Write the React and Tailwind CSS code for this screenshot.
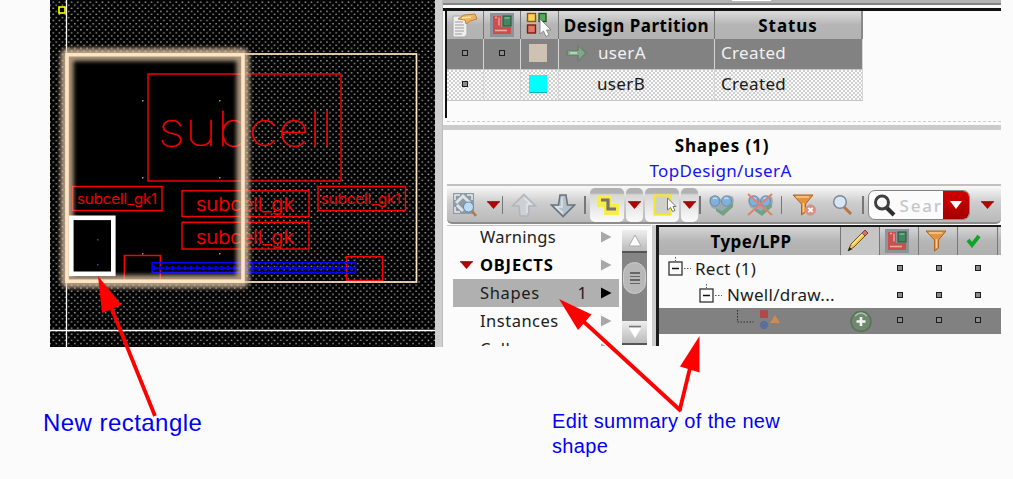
import React from "react";

const SANS = "font-['Noto_Sans','Open_Sans',sans-serif]";

function LayoutCanvas() {
  return (
    <svg width="385" height="347" viewBox="50 0 385 347" className="block shrink-0">
      <defs>
        <pattern id="grid" x="52" y="1" width="6.15" height="6.15" patternUnits="userSpaceOnUse">
          <rect x="0.5" y="0.5" width="1.5" height="1.3" fill="#a8a8a8" />
          <rect x="3.57" y="3.57" width="1.5" height="1.3" fill="#a8a8a8" />
        </pattern>
        <filter id="soft" x="-10%" y="-10%" width="120%" height="120%">
          <feGaussianBlur stdDeviation="2" />
        </filter>
      </defs>
      <rect x="50" y="0" width="385" height="347" fill="#000" />
      <rect x="50" y="0" width="385" height="346" fill="url(#grid)" />
      <rect x="67" y="55" width="176" height="226" fill="#000" />
      <g fill="#9a9aa8">
        {[142, 219].map((x) =>
          [100, 177, 253].map((y) => <rect key={x + "-" + y} x={x} y={y} width="1.5" height="1.5" />)
        )}
      </g>
      <path d="M66.5 0V347M50 330.5H435" stroke="#fff" strokeWidth="1.3" />
      <rect x="59" y="7" width="6" height="6" fill="#000" stroke="#ff0" strokeWidth="1.6" />

      <g fill="none" stroke="#f00" strokeWidth="1.4">
        <rect x="148" y="74" width="193" height="107" />
        <rect x="72.5" y="186.5" width="89.5" height="24" />
        <rect x="318" y="186.5" width="87.5" height="24" />
        <rect x="182" y="190.8" width="127" height="25.7" />
        <rect x="182" y="222.3" width="127" height="26.7" />
        <rect x="124.3" y="255.5" width="36" height="26" />
        <rect x="346.5" y="256.5" width="36" height="24" />
      </g>
      <g fill="#f00" className="font-[Inter,'Liberation_Sans',sans-serif]">
        <text x="158" y="145.500" fontSize="47" fontWeight="100" textLength="175" lengthAdjust="spacingAndGlyphs" stroke="#f00" strokeWidth="0.4">subcell</text>
        <g stroke="#f00" strokeWidth="0.2">
          <text x="77" y="203.500" fontSize="14.5" fontWeight="300" textLength="80" lengthAdjust="spacingAndGlyphs">subcell_gk1</text>
          <text x="321" y="203.500" fontSize="14.5" fontWeight="300" textLength="80" lengthAdjust="spacingAndGlyphs">subcell_gk1</text>
          <text x="196" y="211" fontSize="18.5" fontWeight="300" textLength="98" lengthAdjust="spacingAndGlyphs">subcell_gk</text>
          <text x="196" y="243.500" fontSize="18.5" fontWeight="300" textLength="98" lengthAdjust="spacingAndGlyphs">subcell_gk</text>
        </g>
      </g>
      <g fill="none" stroke="#00f">
        <rect x="152.2" y="262.8" width="203.3" height="9.7" strokeWidth="1.6" />
        <path d="M153 268H355M253.5 263V272" strokeWidth="1.4" />
        <path d="M153 268H355" strokeWidth="4.4" strokeDasharray="2.2 3.95" />
      </g>

      <rect x="66.5" y="54" width="350" height="228" fill="none" stroke="#ffe4c4" strokeWidth="1.7" />
      <rect x="67" y="54.5" width="176" height="227" rx="1" fill="none" stroke="#d9c0a0" strokeWidth="13" opacity="0.78" filter="url(#soft)" />
      <rect x="67" y="54.7" width="176" height="226.5" fill="none" stroke="#ffe4c4" strokeWidth="3.6" />

      <rect x="71.3" y="217.8" width="42" height="56" fill="#000" stroke="#fff" strokeWidth="4.6" />
      <rect x="97" y="239" width="1.5" height="1.5" fill="#7a20d0" />
      <rect x="97" y="264" width="1.5" height="1.5" fill="#7a20d0" />
    </svg>
  );
}

function Dot() {
  return <span className="block size-[6px] border-[1.5px] border-[#1c1c1c] bg-[#8b8b8b]" />;
}

function PartitionIcon() {
  return (
    <svg width="26" height="26" viewBox="0 0 26 26">
      <rect x="1" y="1" width="24" height="24" fill="#8e939b" />
      <rect x="4" y="4" width="8" height="14" fill="#c9504f" />
      <rect x="4" y="15" width="18" height="7" fill="#c9504f" />
      <path d="M6 5.5h2M10 5.5v8M6 18.5h12" stroke="#efaaa6" strokeWidth="1.3" />
      <rect x="14" y="4" width="8" height="10" fill="#438660" stroke="#24553a" />
      <path d="M15.500 6h5" stroke="#9cd0b0" />
    </svg>
  );
}

function NoteIcon() {
  return (
    <svg width="28" height="27" viewBox="0 0 28 27">
      <path d="M2 4h14v18l-2 3H2z" fill="#efefef" stroke="#a8a8a8" />
      <path d="M4 10h8M4 13h9M4 16h9M4 19h9M4 22h7" stroke="#999" strokeWidth="1" />
      <path d="M7 7l6-4 11-1 2 5-7 2-4 3-1-4z" fill="#f0b459" stroke="#b77424" strokeWidth=".8" />
      <path d="M11 6l9-1" stroke="#ffe3a6" strokeWidth="1.6" />
    </svg>
  );
}

function PaletteIcon() {
  return (
    <svg width="27" height="26" viewBox="0 0 27 26">
      <rect x="1.500" y="1.500" width="8" height="8" fill="#fcd05a" stroke="#8c5a00" strokeWidth="1.4" />
      <rect x="13" y="1.500" width="7" height="8" fill="#57a85c" stroke="#1e5826" strokeWidth="1.4" />
      <rect x="1.500" y="13" width="8" height="8" fill="#dd7767" stroke="#7d1c13" strokeWidth="1.4" />
      <path d="M14 7v15l3.500-3 2.500 5.500 3-1.500-2.500-5h4.500z" fill="#fff" stroke="#777" strokeWidth=".8" />
    </svg>
  );
}

function Funnel({ badge }) {
  return (
    <svg width="25" height="24" viewBox="0 0 25 24">
      <path d="M1 2h20l-7.500 9v8l-4 3V11z" fill="#e3933f" stroke="#ad6621" />
      <path d="M4 4h13M11.500 10v9" stroke="#fbcb8f" strokeWidth="1.5" />
      {badge && (
        <g>
          <circle cx="18.500" cy="17" r="5.200" fill="#dd8d80" stroke="#c0a09a" />
          <path d="M16.300 14.800l4.400 4.400M20.700 14.800l-4.400 4.400" stroke="#fff" strokeWidth="1.800" />
        </g>
      )}
    </svg>
  );
}

function PartitionTable() {
  const cell = "flex items-center border-r-[1.5px] border-[#d6d6d6] pb-[3px]";
  return (
    <div className="h-[110px] w-[558px] border-t-[3px] border-[#111]">
      <div className="ml-[2px] flex h-full border-l-[2px] border-[#111]">
        <div className="w-[416px] text-[17px] leading-none tracking-[0.35px]">
          <div className="flex h-[28px] bg-linear-to-b from-[#dcdcdc] via-[#b5b5b5] to-[#b3b3b3] font-bold text-black">
            <div className="flex w-[37px] items-center justify-center border-r border-[#777]"><NoteIcon /></div>
            <div className="flex w-[37px] items-center justify-center border-r border-[#777]"><PartitionIcon /></div>
            <div className="flex w-[38px] items-center justify-center border-r border-[#777]"><PaletteIcon /></div>
            <div className="flex w-[156px] items-center justify-center border-r-[1.5px] border-[#777] whitespace-nowrap tracking-[0.5px]">Design Partition</div>
            <div className="flex w-[148px] items-center justify-center border-r-2 border-[#888] tracking-[0.9px]">Status</div>
          </div>
          <div className="flex h-[30px] bg-[#828282] text-[#f1f1f1]">
            <div className={"w-[37px] justify-center " + cell}><Dot /></div>
            <div className={"w-[37px] justify-center " + cell}><Dot /></div>
            <div className={"w-[38px] justify-center " + cell}><span className="mr-1 block size-[18px] bg-[#d0c2b2]" /></div>
            <div className={"w-[156px] pl-[7px] " + cell}>
              <svg width="22" height="22" viewBox="0 0 22 22">
                <path d="M0 8h11V2l11 9-11 9v-6H0z" fill="#71806f" />
                <path d="M2 9h11V5l6 6-6 6v-4H2z" fill="#7fa88d" />
                <path d="M4 11h7" stroke="#c6e2cd" strokeWidth="1.500" />
              </svg>
              <span className="ml-[10px]">userA</span>
            </div>
            <div className={"w-[148px] pl-[6px] " + cell}>Created</div>
          </div>
          <div className="flex h-[32px] border-y border-[#c6c6c6] bg-[repeating-conic-gradient(#fbfbfb_0_25%,#cfcfcf_0_50%)] bg-[length:4px_4px] text-[#181818]">
            <div className={"w-[37px] justify-center " + cell}><Dot /></div>
            <div className={"w-[37px] " + cell} />
            <div className={"w-[38px] justify-center " + cell}><span className="mr-1 block size-[18px] bg-[#00ffff] border-b border-[#0bb]" /></div>
            <div className={"w-[156px] pl-[38px] " + cell}>userB</div>
            <div className={"w-[148px] pl-[6px] " + cell}>Created</div>
          </div>
        </div>
      </div>
    </div>
  );
}

function RedTri({ className }) {
  return (
    <svg width="13" height="8" viewBox="0 0 13 8" className={"shrink-0 " + className}>
      <path d="M0 .5h13L6.500 8z" fill="#b80000" />
      <path d="M0 .8h13" stroke="#6d2020" />
    </svg>
  );
}

function Sep({ className }) {
  return <span className={"block h-[18px] w-[1.5px] shrink-0 bg-[#777] " + className} />;
}

function Bird({ crossed, className }) {
  return (
    <svg width="27" height="24" viewBox="0 0 27 24" className={"shrink-0 " + className}>
      <path d="M2 4q5-3 9 0l2.500 3L16 4q5-3 9 0 2 6-1 9l-5 3-5 3-4-2-6-2Q0 10 2 4z" fill="#9aa9b2" />
      <ellipse cx="7" cy="8" rx="4.800" ry="5.200" fill="#7fb0de" stroke="#6b8196" strokeWidth=".8" />
      <ellipse cx="18.500" cy="8" rx="5" ry="5.200" fill="#7fb0de" stroke="#6b8196" strokeWidth=".8" />
      <path d="M5 6q2-2 4 0M16.500 6q2-2 4 0" fill="none" stroke="#c3ddf3" strokeWidth="1.400" />
      <path d="M8 15l6 3 11-8v4l-10 9-7-5z" fill="#74a283" />
      {crossed && <path d="M1 1l24 21M25 1L1 22" stroke="#e2806c" strokeWidth="2" />}
    </svg>
  );
}

function Arrow({ up, className }) {
  return (
    <svg width="26" height="25" viewBox="0 0 26 25" className={"shrink-0 " + className}>
      <path
        d={up ? "M13 1.500L24.500 13H18l-1 10H9L8 13H1.500z" : "M13 23.500L1.500 12H8.500L10 2h6l1.500 10h7z"}
        fill={up ? "#cdd1d3" : "#b5c2cb"}
        stroke={up ? "#b3b7bb" : "#68737e"}
        strokeWidth="1.600"
      />
      <path d={up ? "M13 5l7 6h-4v9" : "M12 4v10H6l7 6"} fill="none" stroke="#e2e8ec" strokeWidth="1.300" />
    </svg>
  );
}

function Toolbar() {
  const pressed = "flex h-[34px] shrink-0 items-center justify-center rounded-[5px] bg-linear-to-b from-[#b2b2b2] from-15% via-[#d7d7d7] via-20% to-[#fbfbfb]";
  return (
    <div className="flex h-[38px] items-center overflow-hidden rounded-b-[5px] border-b-2 border-[#8c8c8c] bg-linear-to-b from-[#fafafa] via-[#cecece] via-45% to-[#b9b9b9] pt-[2px]">
      <svg width="26" height="26" viewBox="0 0 26 26" className="ml-[5px] shrink-0">
        <rect x="1" y="1" width="21" height="21" fill="#8e9aa4" />
        <path d="M3 8V3h5M15 3h5v5M3 15v5h5" fill="none" stroke="#e6ecf0" strokeWidth="1.500" />
        <path d="M4 11l7-7 7 7M5 13l6 6" fill="none" stroke="#dbe3e8" strokeWidth="3" />
        <circle cx="16.500" cy="15" r="5" fill="#bfdbf2" stroke="#5f8ab4" />
        <path d="M20 19l4 5" stroke="#bd7743" strokeWidth="2.600" />
      </svg>
      <RedTri className="ml-[9px]" />
      <Sep className="ml-[1.5px]" />
      <Arrow up className="ml-[8px]" />
      <Arrow className="ml-[13px]" />
      <Sep className="ml-[8px]" />
      <div className={pressed + " ml-[4.500px] w-[34px]"}>
        <svg width="24" height="22" viewBox="0 0 24 22" className="ml-1">
          <path d="M0 1h14v9h8v11H7v-8H0z" fill="#f6ed4a" />
          <path d="M4 6h7v9h8" fill="none" stroke="#77746a" strokeWidth="3.200" />
        </svg>
      </div>
      <div className={pressed + " ml-[2px] w-[17px]"}><RedTri className="" /></div>
      <div className={pressed + " ml-[2px] w-[34px]"}>
        <svg width="26" height="24" viewBox="0 0 26 24" className="ml-1">
          <rect x="3.500" y="2.500" width="16" height="19" fill="#d1d1c9" stroke="#f5e72a" strokeWidth="2.200" />
          <path d="M16.500 5v12l3-2.500 2 4 2.500-1-2-4H25z" fill="#fafafa" stroke="#777" />
        </svg>
      </div>
      <div className={pressed + " ml-[2px] w-[17px]"}><RedTri className="" /></div>
      <Sep className="ml-[1px]" />
      <Bird className="ml-[7px]" />
      <Bird crossed className="ml-[12px]" />
      <Sep className="ml-[7px]" />
      <span className="ml-[10px] shrink-0"><Funnel badge /></span>
      <svg width="21" height="22" viewBox="0 0 21 22" className="ml-[15px] shrink-0">
        <path d="M12 13l7 7" stroke="#b77543" strokeWidth="3" />
        <circle cx="8" cy="8" r="6.300" fill="#d7e5f5" stroke="#7d8795" strokeWidth="1.500" />
      </svg>
      <Sep className="ml-[9px]" />
      <div className="ml-[4px] flex h-[30px] w-[102px] shrink-0 overflow-hidden rounded-[7px] border-[1.5px] border-[#858585] bg-[#fbfbfb]">
        <div className="flex w-[75px] items-center overflow-hidden pl-[4px]">
          <svg width="23" height="23" viewBox="0 0 23 23" className="shrink-0">
            <path d="M13 13l8 8" stroke="#2d2d2d" strokeWidth="4" />
            <circle cx="9" cy="8.500" r="6.500" fill="#fafafa" stroke="#404040" strokeWidth="3" />
          </svg>
          <span className="ml-[4px] text-[17px] leading-none font-medium tracking-[1.8px] text-[#c6c6c6]">Sear</span>
        </div>
        <div className="flex w-[26px] items-center justify-center bg-linear-to-b from-[#d20000] to-[#a40000]">
          <svg width="12" height="8" viewBox="0 0 12 8"><path d="M0 0h12L6 8z" fill="#fff" /></svg>
        </div>
      </div>
      <RedTri className="ml-[11px]" />
    </div>
  );
}

function SideTri({ dark }) {
  return (
    <svg width="12" height="12" viewBox="0 0 12 12" className="shrink-0">
      <path d="M1 .5L11.500 6 1 11.500z" fill={dark ? "#000" : "#a8a8a8"} />
    </svg>
  );
}

function Category({ label, track, bold, selected, count }) {
  return (
    <div className={"flex h-[28px] w-[166px] shrink-0 items-center pr-[7px] " + (selected ? "bg-[#b0b0b0]" : "")}>
      <div className="flex w-[27px] shrink-0 pl-[7px]">
        {bold && <RedTri className="" />}
      </div>
      <span className={"text-[16.5px] leading-none " + track + (bold ? " font-bold text-black" : " text-[#1c1c1c]")}>{label}</span>
      <span className="ml-auto mr-[13px] text-[16.5px] leading-none text-[#1c1c1c]">{count}</span>
      <SideTri dark={selected} />
    </div>
  );
}

function ScrollBar() {
  return (
    <div className="flex h-[119px] w-[25px] shrink-0 flex-col">
      <div className="mt-[4px] flex h-[23px] items-center justify-center border-b-2 border-[#555] bg-linear-to-b from-[#eee] to-[#bbb]">
        <svg width="14" height="13" viewBox="0 0 14 13"><path d="M1 12L7 1l6 11z" fill="#fff" stroke="#aaa" /></svg>
      </div>
      <div className="flex h-[68px] flex-col items-center bg-[#858585] px-[1px] pt-[9px]">
        <div className="flex h-[32px] w-full flex-col items-center justify-center gap-[2px] rounded-full border border-[#ccc] bg-[#b8b8b8]">
          {[0, 1, 2, 3].map((n) => <span key={n} className="block h-[1.5px] w-[10px] bg-[#666]" />)}
        </div>
      </div>
      <div className="flex h-[24px] items-center justify-center border-b-2 border-[#555] bg-linear-to-b from-[#eee] to-[#bbb]">
        <svg width="14" height="14" viewBox="0 0 14 14"><path d="M1 3h12L7 13z" fill="#fff" /><path d="M1 1.500h12" stroke="#777" strokeWidth="1.500" /></svg>
      </div>
    </div>
  );
}

function Minus({ className }) {
  return (
    <svg width="24" height="22" viewBox="0 0 24 22" className={"shrink-0 " + className}>
      <rect x="1" y="5" width="13" height="13" fill="#fbfbfb" stroke="#333" strokeWidth="1.300" />
      <path d="M4 11.500h7" stroke="#111" strokeWidth="1.500" />
      <path d="M7.500 0v4M16 11.500h7" stroke="#555" strokeDasharray="1.500 1.500" />
    </svg>
  );
}

function Flags() {
  return (
    <div className="flex items-center">
      {[0, 1, 2].map((n) => <div key={n} className="flex w-[39px] justify-center"><Dot /></div>)}
    </div>
  );
}

function TreeTable() {
  const row = "flex h-[26.5px] w-[342px] items-center text-[17px] leading-none tracking-[0.3px] text-[#1c1c1c]";
  return (
    <div className="h-[121px] w-[345px] border-t-[2px] border-l-[3px] border-[#1b1b1b]">
      <div className="flex h-[28px] w-[342px] items-center bg-linear-to-b from-[#d5d5d5] via-[#b6b6b6] to-[#b0b0b0]">
        <div className="flex h-full w-[182px] items-center justify-center border-r-[1.5px] border-[#777] pl-[3px] pt-[1px] text-[17px] font-bold tracking-[0.4px] text-black">Type/LPP</div>
        <div className="flex h-full w-[39px] items-center justify-center border-r-[1.5px] border-[#777] bg-[#c5c5c5] pr-[4px]">
          <svg width="24" height="24" viewBox="0 0 24 24">
            <path d="M2 22l3-7L18 2l3 3L8 18z" fill="#f6c244" stroke="#6f5522" />
            <path d="M16 4l3-3 3 3-3 3z" fill="#d8706a" stroke="#69443c" />
            <path d="M6 16L17 5" stroke="#ffe9a0" strokeWidth="1.300" />
            <path d="M2 22l1.500-4 2.500 2.500z" fill="#222" />
          </svg>
        </div>
        <div className="flex h-full w-[39px] items-center justify-center border-r-[1.5px] border-[#777] pr-[5px]"><PartitionIcon /></div>
        <div className="flex h-full w-[39px] items-center justify-center border-r-[1.5px] border-[#777] pr-[1px]"><Funnel /></div>
        <div className="flex h-full w-[40px] items-center justify-center border-r-[1.5px] border-[#777] pr-[8px]">
          <svg width="15" height="14" viewBox="0 0 15 14"><path d="M2 6l4 5 7-9" fill="none" stroke="#10a32b" strokeWidth="3.800" /></svg>
        </div>
      </div>
      <div className={row}>
        <Minus className="ml-[9px]" />
        <span className="ml-[3px] flex-1">Rect (1)</span>
        <Flags />
        <span className="w-[4px]" />
      </div>
      <div className={row}>
        <Minus className="ml-[40px]" />
        <span className="ml-[4px] flex-1">Nwell/draw...</span>
        <Flags />
        <span className="w-[4px]" />
      </div>
      <div className="flex h-[26px] w-[342px] items-center bg-[#818181]">
        <svg width="46" height="24" viewBox="0 0 46 24" className="ml-[77px] shrink-0">
          <path d="M1.500 1v12h16" fill="none" stroke="#2c2c2c" strokeDasharray="1.500 1.500" />
          <rect x="24" y="1" width="8" height="8" fill="#ae4a4a" />
          <circle cx="28" cy="16" r="4.200" fill="#5b6f9c" />
          <path d="M39 6l5 8H34z" fill="#d08a4c" />
        </svg>
        <svg width="24" height="24" viewBox="0 0 24 24" className="ml-[67px] shrink-0">
          <circle cx="12" cy="12.500" r="10" fill="#708870" stroke="#567456" strokeWidth="1.500" />
          <path d="M6 7q6-6 12 0" fill="none" stroke="#a4c4a4" strokeWidth="1.500" />
          <path d="M12 8v9M7.500 12.500h9" stroke="#edf6ed" strokeWidth="2.600" />
        </svg>
        <span className="flex-1" />
        <div className="pb-[2px]"><Flags /></div>
        <span className="w-[4px]" />
      </div>
    </div>
  );
}

function SidePanel() {
  return (
    <div className={"flex h-[347px] w-[558px] flex-col overflow-hidden bg-[#fbfbfb] " + SANS}>
      <div className="h-[5px] shrink-0 border-b-2 border-[#858585] bg-[#b4b4b4] pl-[289px]">
        <div className="h-[1px] w-[39px] bg-white" />
      </div>
      <div className="h-[3px] shrink-0" />
      <PartitionTable />
      <div className="ml-[4px] h-[4px] shrink-0 border-b border-dashed border-[#ccc]" />
      <div className="mt-[3px] h-[5px] shrink-0 bg-[#cbcbcb]" />
      <div className="flex h-[55px] shrink-0 flex-col items-center text-[17px] leading-none">
        <div className="mt-[7px] font-bold tracking-[0.9px] text-black">Shapes (1)</div>
        <div className="mt-[8px] mr-[3px] tracking-[0.35px] text-[#1414f0]">TopDesign/userA</div>
      </div>
      <div className="ml-[4px] h-[1.5px] shrink-0 -mt-[1px] bg-[#c0c0c0]" />
      <div className="ml-[4px] mt-[0.5px] shrink-0"><Toolbar /></div>
      <div className="mt-[1px] flex h-[121px] shrink-0">
        <div className="flex h-[121px] w-[204px] shrink-0 border-t border-[#c4c4c4] ml-[4px]">
          <div className="flex w-[175px] flex-col overflow-hidden pl-[6px]">
            <div className="-mt-[3px] flex flex-col">
              <Category label="Warnings" track="tracking-[0.25px]" />
              <Category label="OBJECTS" track="tracking-[0.8px]" bold />
              <Category label="Shapes" track="tracking-[0.65px]" selected count="1" />
              <Category label="Instances" track="tracking-[0.5px]" />
              <Category label="Cells" track="tracking-[0.5px]" />
            </div>
          </div>
          <ScrollBar />
        </div>
        <div className="ml-[1px] mr-[-1px] h-full w-[4px] bg-[#cdcdcd]" />
        <div className="ml-[1px]"><TreeTable /></div>
      </div>
    </div>
  );
}

export default function App() {
  return (
    <div className="relative h-[479px] w-[1013px] overflow-hidden bg-[#fbfbfb]">
      <div className="flex h-[347px] pl-[50px]">
        <LayoutCanvas />
        <div className="h-full w-[8px] shrink-0 border-r border-[#bdbdbd] bg-[#cfcfcf]" />
        <SidePanel />
      </div>
      <div className="flex font-['Liberation_Sans',Arial,sans-serif] text-[#0000f5]">
        <p className="ml-[43px] mt-[61px] w-[508px] text-[24px] leading-[30px] tracking-[0.45px]">New rectangle</p>
        <p className="ml-[1px] mt-[62px] w-[260px] text-[20px] leading-[25px] tracking-[0.35px]">Edit summary of the new<br />shape</p>
      </div>
      <svg width="1013" height="479" viewBox="0 0 1013 479" className="pointer-events-none absolute inset-0">
        <g stroke="#f00" strokeWidth="3.800">
          <path d="M111 307L155 416" />
          <path d="M583 321L681 411" />
          <path d="M690 368L679.500 411" />
        </g>
        <g fill="#f00">
          <path d="M98 276l23.500 29-19.500 8z" />
          <path d="M559 299l32.500 15.500L578 330z" />
          <path d="M699.500 336v36.500L680 366.500z" />
        </g>
      </svg>
    </div>
  );
}
